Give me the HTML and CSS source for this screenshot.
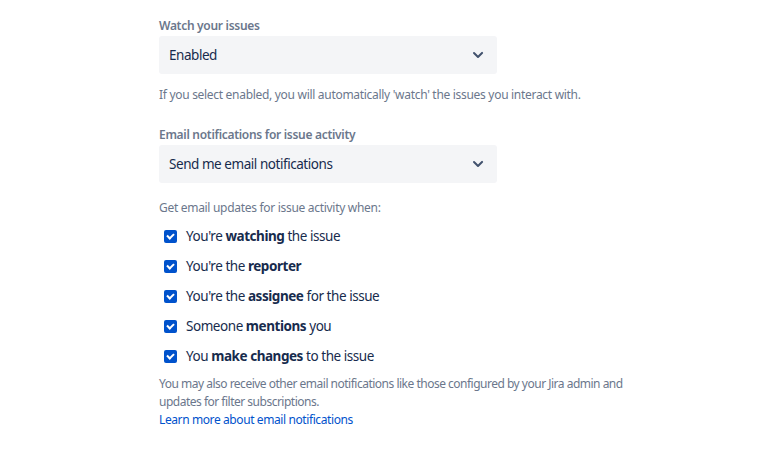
FILE: index.html
```html
<!DOCTYPE html>
<html lang="en">

<head>
    <meta charset="UTF-8">
    <meta name="viewport" content="width=device-width, initial-scale=1.0">
    <title>Notification settings</title>
    <link rel="stylesheet" href="styles.css">
</head>

<body>
    <div class="settings">
        <div class="field">
            <label class="field-label">Watch your issues</label>
            <div class="select">
                <span>Enabled</span>
                <svg class="chevron" width="24" height="24" viewBox="0 0 24 24">
                    <path d="M7.3 9.3a1 1 0 0 1 1.4 0L12 12.6l3.3-3.3a1 1 0 1 1 1.4 1.4l-4 4a1 1 0 0 1-1.4 0l-4-4a1 1 0 0 1 0-1.4z" fill="currentColor"/>
                </svg>
            </div>
            <p class="help">If you select enabled, you will automatically 'watch' the issues you interact with.</p>
        </div>

        <div class="field">
            <label class="field-label">Email notifications for issue activity</label>
            <div class="select">
                <span>Send me email notifications</span>
                <svg class="chevron" width="24" height="24" viewBox="0 0 24 24">
                    <path d="M7.3 9.3a1 1 0 0 1 1.4 0L12 12.6l3.3-3.3a1 1 0 1 1 1.4 1.4l-4 4a1 1 0 0 1-1.4 0l-4-4a1 1 0 0 1 0-1.4z" fill="currentColor"/>
                </svg>
            </div>
        </div>

        <p class="help intro">Get email updates for issue activity when:</p>

        <ul class="checks">
            <li><span class="box"></span><span>You're <b>watching</b> the issue</span></li>
            <li><span class="box"></span><span>You're the <b>reporter</b></span></li>
            <li><span class="box"></span><span>You're the <b>assignee</b> for the issue</span></li>
            <li><span class="box"></span><span>Someone <b>mentions</b> you</span></li>
            <li><span class="box"></span><span>You <b>make changes</b> to the issue</span></li>
        </ul>

        <p class="help footnote">You may also receive other email notifications like those configured by your Jira admin and updates for filter subscriptions.</p>
        <a class="link" href="#">Learn more about email notifications</a>
    </div>
</body>

</html>
```

FILE: styles.css
```css
body {
    margin: 0;
    padding: 0;
    background: #fff;
    font-family: "Noto Sans", "Open Sans", sans-serif;
    color: #172b4d;
}

.settings {
    width: 480px;
    margin-left: 159px;
    padding-top: 18px;
}

.field-label {
    display: block;
    font-size: 12px;
    font-weight: 600;
    line-height: 16px;
    letter-spacing: -0.3px;
    color: #6b778c;
    margin-bottom: 2px;
}

.select {
    display: flex;
    align-items: center;
    justify-content: space-between;
    width: 338px;
    height: 38px;
    box-sizing: border-box;
    padding: 0 7px 0 10px;
    background: #f4f5f7;
    border-radius: 3px;
    font-size: 13.5px;
    letter-spacing: -0.45px;
}

.chevron {
    color: #42526e;
}

.help {
    margin: 0;
    font-size: 12px;
    line-height: 18px;
    letter-spacing: -0.3px;
    color: #6b778c;
}

.field .help {
    margin-top: 12px;
    margin-bottom: 23px;
}

.intro {
    margin-top: 16px;
}

.checks {
    list-style: none;
    margin: 4px 0 0;
    padding: 0;
}

.checks li {
    display: flex;
    align-items: center;
    height: 30px;
    font-size: 13.5px;
    letter-spacing: -0.45px;
}

.checks b {
    font-weight: 700;
}

.box {
    width: 13px;
    height: 13px;
    margin: 0 9px 0 5px;
    border-radius: 2px;
    background: #0052cc;
    position: relative;
}

.box::after {
    content: "";
    position: absolute;
    left: 3px;
    top: 2px;
    width: 5px;
    height: 3px;
    border-left: 2px solid #fff;
    border-bottom: 2px solid #fff;
    transform: translate(0, 1px) rotate(-45deg);
}

.footnote {
    margin-top: 4px;
    letter-spacing: -0.5px;
}

.link {
    display: block;
    font-size: 12px;
    line-height: 18px;
    letter-spacing: -0.4px;
    color: #0052cc;
    text-decoration: none;
}
```
